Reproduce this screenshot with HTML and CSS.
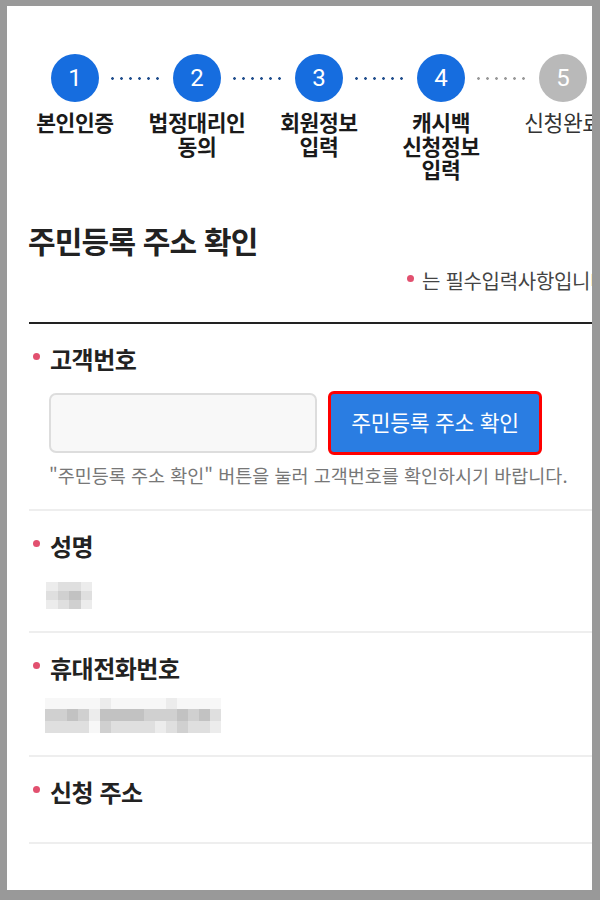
FILE: index.html
```html
<!DOCTYPE html>
<html lang="ko">
<head>
    <meta charset="UTF-8">
    <meta name="viewport" content="width=device-width, initial-scale=1.0">
    <title>주민등록 주소 확인</title>
    <link rel="stylesheet" href="styles.css">
</head>
<body>
    <div class="frame">
        <div class="screen">
            <div class="page">
                <ol class="steps">
                    <li class="step">
                        <span class="step-num">1</span>
                        <span class="step-label">본인인증</span>
                    </li>
                    <li class="step">
                        <span class="step-num">2</span>
                        <span class="step-label">법정대리인<br>동의</span>
                    </li>
                    <li class="step">
                        <span class="step-num">3</span>
                        <span class="step-label">회원정보<br>입력</span>
                    </li>
                    <li class="step">
                        <span class="step-num">4</span>
                        <span class="step-label">캐시백<br>신청정보<br>입력</span>
                    </li>
                    <li class="step pending">
                        <span class="step-num">5</span>
                        <span class="step-label">신청완료</span>
                    </li>
                </ol>

                <h2 class="title">주민등록 주소 확인</h2>
                <p class="req-note"><span class="dot"></span>는 필수입력사항입니다.</p>

                <div class="form">
                    <div class="field">
                        <div class="field-label">고객번호</div>
                        <div class="field-body">
                            <div class="input-row">
                                <input type="text" class="text-input">
                                <button class="btn-check">주민등록 주소 확인</button>
                            </div>
                            <p class="field-help">"주민등록 주소 확인" 버튼을 눌러 고객번호를 확인하시기 바랍니다.</p>
                        </div>
                    </div>

                    <div class="field">
                        <div class="field-label">성명</div>
                        <div class="field-body">
                            <!-- 개인정보 모자이크 -->
                            <div class="mosaic mosaic-name">
                                <i class="c1"></i><i class="c2"></i><i class="c2"></i><i class="c1"></i>
                                <i class="c2"></i><i class="c3"></i><i class="c4"></i><i class="c2"></i>
                                <i class="c1"></i><i class="c2"></i><i class="c3"></i><i class="c1"></i>
                            </div>
                        </div>
                    </div>

                    <div class="field">
                        <div class="field-label">휴대전화번호</div>
                        <div class="field-body">
                            <div class="mosaic mosaic-phone">
                                <i class="c0"></i><i class="c0"></i><i class="c0"></i><i class="c0"></i><i class="c0"></i><i class="c1"></i><i class="c0"></i><i class="c0"></i><i class="c0"></i><i class="c0"></i><i class="c0"></i><i class="c1"></i><i class="c0"></i><i class="c0"></i><i class="c0"></i><i class="c0"></i>
                                <i class="c3"></i><i class="c3"></i><i class="c4"></i><i class="c3"></i><i class="c1"></i><i class="c4"></i><i class="c4"></i><i class="c4"></i><i class="c4"></i><i class="c3"></i><i class="c3"></i><i class="c3"></i><i class="c4"></i><i class="c3"></i><i class="c4"></i><i class="c2"></i>
                                <i class="c2"></i><i class="c2"></i><i class="c2"></i><i class="c2"></i><i class="c0"></i><i class="c3"></i><i class="c2"></i><i class="c2"></i><i class="c2"></i><i class="c2"></i><i class="c1"></i><i class="c2"></i><i class="c3"></i><i class="c2"></i><i class="c2"></i><i class="c1"></i>
                            </div>
                        </div>
                    </div>

                    <div class="field field-last">
                        <div class="field-label">신청 주소</div>
                    </div>
                </div>
            </div>
        </div>
    </div>
</body>
</html>
```

FILE: styles.css
```css
body {
    margin: 0;
    background-color: #999999;
    font-family: "Noto Sans CJK KR", "Noto Sans", sans-serif;
    color: #222222;
}
.frame {
    width: 600px;
    height: 900px;
    box-sizing: border-box;
    border-style: solid;
    border-color: #999999;
    border-width: 6px 8px 10px 7px;
}
.screen {
    height: 100%;
    background: #ffffff;
    overflow: hidden;
}
.page {
    width: 630px;
}
.steps {
    display: flex;
    list-style: none;
    margin: 0;
    padding: 48px 0 0 7px;
}
.step {
    position: relative;
    flex: none;
    width: 122px;
    display: flex;
    flex-direction: column;
    align-items: center;
    text-align: center;
}
.step + .step::before {
    content: '';
    position: absolute;
    top: 23px;
    left: calc(50% - 89px);
    width: 54px;
    height: 3px;
    background: radial-gradient(circle, #23508e 1.1px, transparent 1.6px) 0 0 / 9px 3px repeat-x;
}
.step.pending::before {
    background-image: radial-gradient(circle, #9a9a9a 1.1px, transparent 1.6px);
}
.step-num {
    width: 48px;
    height: 48px;
    border-radius: 50%;
    background-color: #166ddf;
    color: #ffffff;
    display: flex;
    align-items: center;
    justify-content: center;
    font-family: Roboto, "Noto Sans", sans-serif;
    font-size: 24px;
}
.step.pending .step-num {
    background-color: #b9b9b9;
}
.step-label {
    margin-top: 8px;
    font-size: 21.5px;
    font-weight: bold;
    line-height: 23.5px;
    letter-spacing: -0.4px;
    color: #1a1a1a;
    white-space: nowrap;
}
.step.pending .step-label {
    font-weight: normal;
    color: #333333;
}
.title {
    margin: 41px 0 0;
    padding-left: 21px;
    font-size: 30px;
    line-height: 36px;
    font-weight: bold;
    letter-spacing: -0.8px;
}
.req-note {
    margin: 11px 0 0;
    padding-left: 400px;
    font-size: 20px;
    line-height: 24px;
    color: #444444;
    letter-spacing: -0.3px;
    white-space: nowrap;
}
.req-note .dot,
.field-label::before {
    display: inline-block;
    width: 7px;
    height: 7px;
    border-radius: 50%;
    background-color: #e2506f;
}
.req-note .dot {
    margin: 0 8px 0 0;
    vertical-align: 7px;
}
.form {
    margin: 29px 0 0 22px;
    border-top: 2px solid #222222;
}
.field {
    padding: 22px 0;
    border-bottom: 2px solid #eeeeee;
}
.field-last {
    padding-bottom: 37px;
}
.field-label {
    display: flex;
    align-items: center;
    font-size: 24px;
    line-height: 26px;
    font-weight: bold;
    letter-spacing: -0.5px;
}
.field-label::before {
    content: '';
    flex: none;
    margin: 0 10px 4px 4px;
}
.field-body {
    padding-left: 20px;
}
.input-row {
    display: flex;
    align-items: center;
    margin-top: 19px;
}
.text-input {
    width: 268px;
    height: 60px;
    box-sizing: border-box;
    border: 2px solid #dddddd;
    border-radius: 7px;
    background-color: #f8f8f8;
}
.btn-check {
    margin-left: 11px;
    width: 214px;
    height: 64px;
    box-sizing: border-box;
    border: 3px solid #ff0000;
    border-radius: 6px;
    background-color: #2a7de2;
    color: #ffffff;
    font-family: "Noto Sans CJK KR", sans-serif;
    font-size: 21.5px;
    letter-spacing: -0.3px;
    padding: 0 0 2px;
}
.field-help {
    margin: 8px 0 0;
    font-size: 18.5px;
    line-height: 24px;
    color: #777777;
    white-space: nowrap;
}
.mosaic {
    display: grid;
    margin-left: -3px;
}
.mosaic i {
    display: block;
}
.mosaic-name {
    margin-top: 23px;
    grid-template-columns: repeat(4, 11.5px);
    grid-auto-rows: 9px;
}
.mosaic-phone {
    margin-top: 17px;
    margin-left: -4px;
    grid-template-columns: repeat(16, 11px);
    grid-auto-rows: 11.7px;
}
.c0 { background-color: #f7f7f7; }
.c1 { background-color: #ececec; }
.c2 { background-color: #dfdfdf; }
.c3 { background-color: #d0d0d0; }
.c4 { background-color: #c2c2c2; }
```
